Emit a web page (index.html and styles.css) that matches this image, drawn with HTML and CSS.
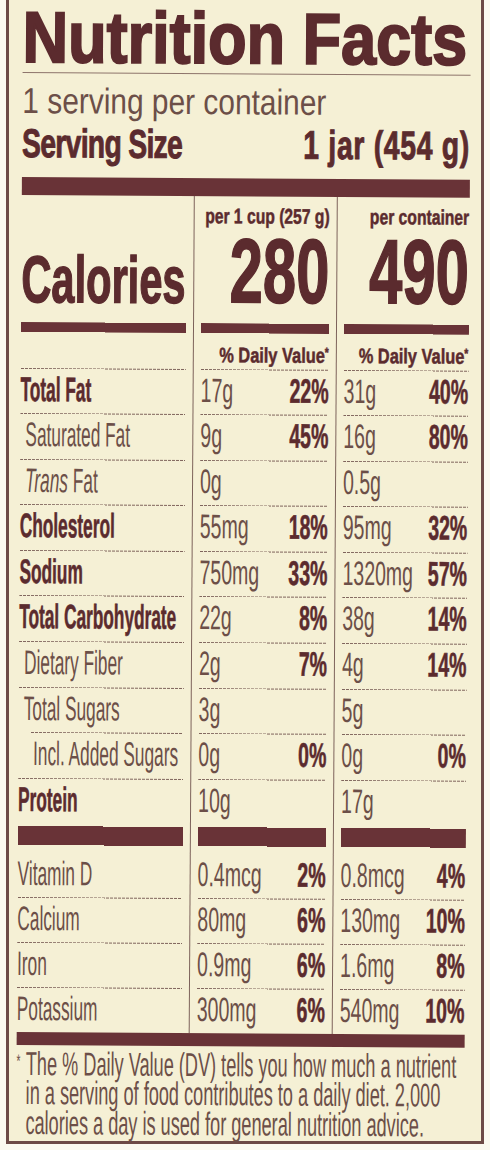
FILE: index.html
```html
<!DOCTYPE html>
<html lang="en">
<head>
    <meta charset="UTF-8">
    <meta name="viewport" content="width=device-width, initial-scale=1.0">
    <title>Nutrition Facts</title>
    <link rel="stylesheet" href="styles.css">
</head>
<body>
    <div class="label">
        <div class="panel">
            <h1 class="w title">Nutrition Facts</h1>
            <div class="w servings">1 serving per container</div>
            <div class="w size"><b class="ss">Serving Size</b><b class="amt">1 jar (454 g)</b></div>
            <div class="bar"></div>

            <div class="row head">
                <div class="c"><div class="w cal">Calories</div></div>
                <div class="c"><div class="w per">per 1 cup (257 g)</div><div class="w kcal">280</div></div>
                <div class="c"><div class="w per">per container</div><div class="w kcal">490</div></div>
            </div>
            <div class="row fill">
                <div class="c"></div><div class="c"></div><div class="c"></div>
            </div>
            <div class="row dv">
                <div class="c"></div>
                <div class="c"><div class="w">% Daily Value<sup>*</sup></div></div>
                <div class="c"><div class="w">% Daily Value<sup>*</sup></div></div>
            </div>

            <div class="row">
                <div class="c"><div class="w lb"><b>Total Fat</b></div></div>
                <div class="c"><div class="w"><span>17g</span><b>22%</b></div></div>
                <div class="c"><div class="w"><span>31g</span><b>40%</b></div></div>
            </div>
            <div class="row">
                <div class="c"><div class="w lb sub"><span>Saturated Fat</span></div></div>
                <div class="c"><div class="w"><span>9g</span><b>45%</b></div></div>
                <div class="c"><div class="w"><span>16g</span><b>80%</b></div></div>
            </div>
            <div class="row">
                <div class="c"><div class="w lb sub"><span><i>Trans</i> Fat</span></div></div>
                <div class="c"><div class="w"><span>0g</span></div></div>
                <div class="c"><div class="w"><span>0.5g</span></div></div>
            </div>
            <div class="row">
                <div class="c"><div class="w lb"><b>Cholesterol</b></div></div>
                <div class="c"><div class="w"><span>55mg</span><b>18%</b></div></div>
                <div class="c"><div class="w"><span>95mg</span><b>32%</b></div></div>
            </div>
            <div class="row">
                <div class="c"><div class="w lb"><b>Sodium</b></div></div>
                <div class="c"><div class="w"><span>750mg</span><b>33%</b></div></div>
                <div class="c"><div class="w"><span>1320mg</span><b>57%</b></div></div>
            </div>
            <div class="row">
                <div class="c"><div class="w lb"><b>Total Carbohydrate</b></div></div>
                <div class="c"><div class="w"><span>22g</span><b>8%</b></div></div>
                <div class="c"><div class="w"><span>38g</span><b>14%</b></div></div>
            </div>
            <div class="row">
                <div class="c"><div class="w lb sub"><span>Dietary Fiber</span></div></div>
                <div class="c"><div class="w"><span>2g</span><b>7%</b></div></div>
                <div class="c"><div class="w"><span>4g</span><b>14%</b></div></div>
            </div>
            <div class="row ts">
                <div class="c"><div class="w lb sub"><span>Total Sugars</span></div></div>
                <div class="c"><div class="w"><span>3g</span></div></div>
                <div class="c"><div class="w"><span>5g</span></div></div>
            </div>
            <div class="row">
                <div class="c"><div class="w lb sub2"><span>Incl. Added Sugars</span></div></div>
                <div class="c"><div class="w"><span>0g</span><b>0%</b></div></div>
                <div class="c"><div class="w"><span>0g</span><b>0%</b></div></div>
            </div>
            <div class="row nl">
                <div class="c"><div class="w lb"><b>Protein</b></div></div>
                <div class="c"><div class="w"><span>10g</span></div></div>
                <div class="c"><div class="w"><span>17g</span></div></div>
            </div>

            <div class="row thick">
                <div class="c"></div><div class="c"></div><div class="c"></div>
            </div>

            <div class="row lo">
                <div class="c"><div class="w lb"><span>Vitamin D</span></div></div>
                <div class="c"><div class="w"><span>0.4mcg</span><b>2%</b></div></div>
                <div class="c"><div class="w"><span>0.8mcg</span><b>4%</b></div></div>
            </div>
            <div class="row lo">
                <div class="c"><div class="w lb"><span>Calcium</span></div></div>
                <div class="c"><div class="w"><span>80mg</span><b>6%</b></div></div>
                <div class="c"><div class="w"><span>130mg</span><b>10%</b></div></div>
            </div>
            <div class="row lo">
                <div class="c"><div class="w lb"><span>Iron</span></div></div>
                <div class="c"><div class="w"><span>0.9mg</span><b>6%</b></div></div>
                <div class="c"><div class="w"><span>1.6mg</span><b>8%</b></div></div>
            </div>
            <div class="row lo last nl">
                <div class="c"><div class="w lb"><span>Potassium</span></div></div>
                <div class="c"><div class="w"><span>300mg</span><b>6%</b></div></div>
                <div class="c"><div class="w"><span>540mg</span><b>10%</b></div></div>
            </div>

            <div class="bar end"></div>
            <p class="w note"><span class="ast">*</span>The % Daily Value (DV) tells you how much a nutrient<br>in a serving of food contributes to a daily diet. 2,000<br>calories a day is used for general nutrition advice.</p>
        </div>
    </div>
</body>
</html>
```

FILE: styles.css
```css
* {
    box-sizing: border-box;
}
body {
    margin: 0;
    background: #fbf9ef;
    font-family: "Liberation Sans", Arial, sans-serif;
    color: #6c4f48;
}
b {
    color: #5b2b2e;
    -webkit-text-stroke: .6px #5b2b2e;
}

.label {
    margin-left: 6px;
    width: 478px;
    height: 1144px;
    padding: 0 10.5px 0 13.5px;
    background: #f5f0d5;
    border: 3px solid #6d4a46;
    border-top: none;
}
.panel {
    transform: rotate(.35deg);
    transform-origin: 0 0;
}

/* squeezed text box: laid out wide, then scaled back to the column */
.w {
    --k: .574;
    width: calc(100% / var(--k));
    transform: scaleX(var(--k));
    transform-origin: 0 0;
    white-space: nowrap;
    display: flex;
    justify-content: space-between;
}

.title {
    --k: .875;
    margin: 0;
    padding-top: 2px;
    font-size: 72px;
    line-height: 70px;
    font-weight: 700;
    color: #5b2b2e;
    -webkit-text-stroke: 2px #5b2b2e;
    border-bottom: 1px solid #8d746b;
}
.servings {
    --k: .83;
    margin-top: 7.5px;
    font-size: 36px;
    line-height: 40px;
}
.size {
    --k: .705;
    margin-top: .5px;
    font-size: 40px;
    line-height: 44px;
}
.size b {
    -webkit-text-stroke: 1px #5b2b2e;
}
.size .ss {
    letter-spacing: -.9px;
}
.size .amt {
    letter-spacing: 1.1px;
}
.bar {
    height: 18px;
    margin-top: 12px;
    background: #693337;
}
.bar.end {
    margin-top: 0;
    height: 13px;
}

.row {
    display: grid;
    grid-template-columns: 171.5px 143px 133px;
    height: 45.6px;
}
.c {
    padding-right: 7px;
    background: repeating-linear-gradient(90deg, #7f645c 0 3px, transparent 3px 4px) left bottom / 100% 1px no-repeat content-box;
}
.c + .c {
    border-left: 1px solid #7d625b;
    padding-left: 7px;
}
.c:last-child {
    padding-left: 7.5px;
    padding-right: 0;
}
.row .w {
    font-size: 34px;
    line-height: 40px;
}
.lb {
    --k: .508;
}
.sub {
    padding-left: 10px;
}
.sub2 {
    padding-left: 29px;
}
.nl .c {
    background: none;
}
.ts .c:first-child {
    background-size: calc(100% - 12.5px) 1px;
    background-position: right bottom;
}

.head {
    height: 127px;
}
.head .c {
    background: none;
    display: flex;
    flex-direction: column;
    justify-content: flex-end;
    padding-bottom: 11.6px;
}
.head .c:first-child {
    padding-bottom: 7.8px;
}
.row .cal {
    --k: .631;
    font-size: 66px;
    line-height: 70px;
    font-weight: 700;
    color: #5b2b2e;
    -webkit-text-stroke: 1.4px #5b2b2e;
}
.row .per {
    --k: .746;
    font-size: 21px;
    line-height: 24px;
    font-weight: 700;
    color: #5b2b2e;
    -webkit-text-stroke: .5px #5b2b2e;
    justify-content: flex-end;
    margin-bottom: 3.7px;
}
.row .kcal {
    --k: .656;
    font-size: 91px;
    line-height: 80px;
    font-weight: 700;
    color: #5b2b2e;
    -webkit-text-stroke: 1.6px #5b2b2e;
    justify-content: flex-end;
}

.fill {
    height: 10px;
}
.fill .c {
    background: #693337 content-box;
}
.dv {
    height: 36.5px;
}
.dv .c {
    padding-top: 10px;
}
.row.dv .w {
    --k: .78;
    display: block;
    text-align: right;
    font-size: 21px;
    line-height: 24px;
    font-weight: 700;
    color: #5b2b2e;
    -webkit-text-stroke: .5px #5b2b2e;
}
.dv sup {
    font-size: 13px;
    line-height: 1;
    vertical-align: 6px;
}

.thick {
    height: 28.5px;
}
.thick .c {
    padding-top: 1.5px;
    padding-bottom: 8px;
    background: #693337 content-box;
}
.lo {
    height: 45px;
}
.lo.last {
    height: 44px;
}

.note {
    --k: .55;
    display: block;
    margin: 3.8px 0 0;
    padding-left: 17px;
    font-size: 33px;
    line-height: 29.5px;
}
.ast {
    display: inline-block;
    width: 17px;
    margin-left: -17px;
    font-size: 18px;
    line-height: 1;
    vertical-align: 8px;
}
```
